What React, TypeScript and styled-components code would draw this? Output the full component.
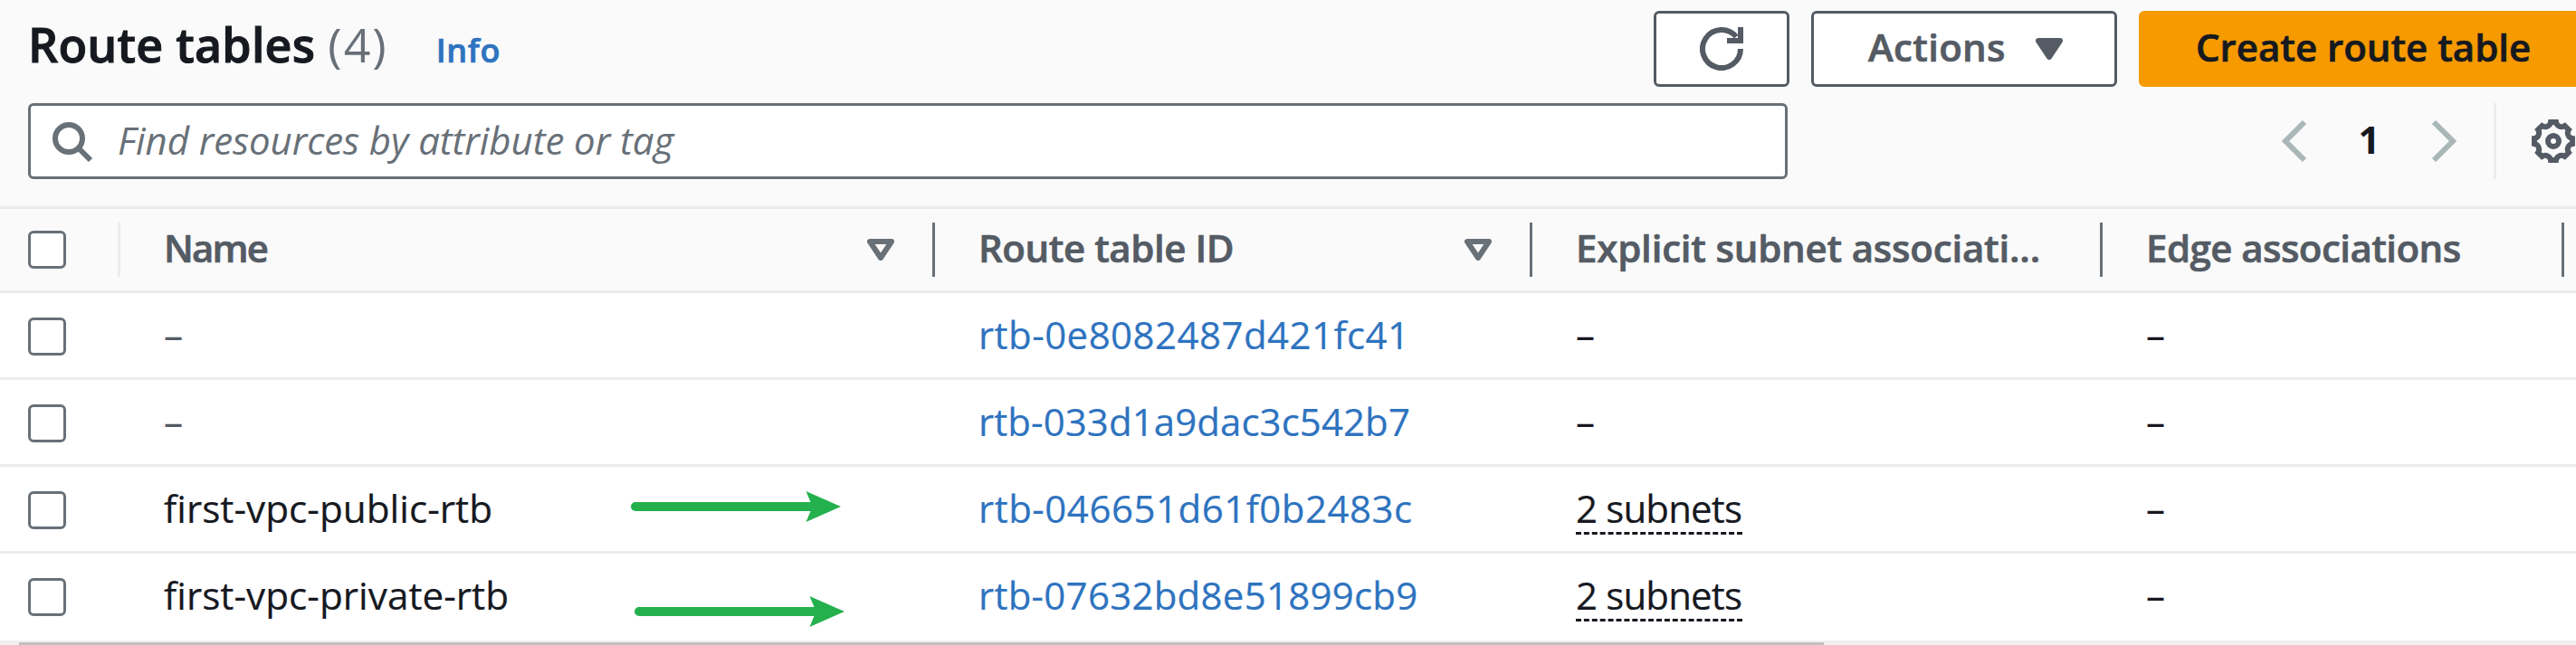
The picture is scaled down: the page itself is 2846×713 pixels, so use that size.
import React from "react";
import styled, { createGlobalStyle, css } from "styled-components";

const color = {
  text: "#16191f",
  heading: "#545b64",
  muted: "#687078",
  link: "#2e73bf",
  line: "#eaeded",
  panel: "#fafafa",
  disabled: "#aab7b8",
  primary: "#f69a00",
  marker: "#24b14d",
};

const GlobalStyle = createGlobalStyle`
  *, *::before, *::after { box-sizing: border-box; }
  body {
    margin: 0;
    overflow: hidden;
    background: #fff;
    color: ${color.text};
    font-family: "Open Sans", "Noto Sans", sans-serif;
    font-size: 42px;
    line-height: 60px;
  }
`;

const strong = css`
  font-weight: 600;
  -webkit-text-stroke: 0.7px currentColor;
`;

const Panel = styled.main`
  position: relative;
  width: 2846px;
  height: 713px;
  overflow: hidden;
  display: flex;
  flex-direction: column;
`;

const Toolbar = styled.header`
  height: 231px;
  flex: none;
  padding: 12px 0 0 31px;
  background: ${color.panel};
  border-bottom: 3px solid ${color.line};
  display: flex;
  flex-direction: column;
  gap: 18px;
`;

const ToolbarRow = styled.div`
  display: flex;
  height: 84px;
  flex: none;
`;

const TitleGroup = styled.div`
  flex: none;
  width: 1796px;
  display: flex;
  align-items: baseline;
  padding-top: 7px;
`;

const Title = styled.h1`
  ${strong}
  margin: 0;
  font-size: 52px;
  line-height: 60px;
  letter-spacing: 0.2px;
  -webkit-text-stroke-width: 1px;
`;

const Count = styled.span`
  margin-left: 14px;
  font-size: 52px;
  letter-spacing: 2px;
  color: ${color.muted};
`;

const InfoLink = styled.a`
  ${strong}
  margin-left: 53px;
  font-size: 36px;
  letter-spacing: 0.6px;
  color: ${color.link};
`;

const Button = styled.button<{ $primary?: boolean; $width: number }>`
  flex: none;
  width: ${(p) => p.$width}px;
  height: 84px;
  margin: 0 24px 0 0;
  padding: 0 0 4px 60px;
  display: flex;
  align-items: center;
  font: inherit;
  ${strong}
  letter-spacing: ${(p) => (p.$primary ? 0 : 0.3)}px;
  white-space: nowrap;
  color: ${(p) => (p.$primary ? color.text : color.heading)};
  background: ${(p) => (p.$primary ? color.primary : "#fff")};
  border: 3px solid ${(p) => (p.$primary ? color.primary : color.heading)};
  border-radius: 6px;
`;

const IconButton = styled(Button)`
  padding: 0;
  justify-content: center;
`;

const CaretIcon = styled.svg`
  width: 30px;
  height: 24px;
  margin: 4px 57px 0 auto;
`;

const SearchField = styled.label`
  flex: none;
  width: 1944px;
  height: 84px;
  padding: 0 21px;
  display: flex;
  align-items: center;
  gap: 27px;
  background: #fff;
  border: 3px solid ${color.muted};
  border-radius: 6px;
`;

const Placeholder = styled.span`
  padding-bottom: 2px;
  font-style: italic;
  letter-spacing: -0.08px;
  color: ${color.muted};
`;

const Glyph = styled.svg`
  flex: none;
  width: 48px;
  height: 48px;
  fill: none;
  stroke-width: 2;
`;

const Pagination = styled.nav`
  display: flex;
  align-items: center;
  margin-left: 535px;
`;

const PageNumber = styled.span`
  width: 119px;
  padding-bottom: 4px;
  text-align: center;
  font-weight: 700;
`;

const Settings = styled.div`
  height: 84px;
  margin-left: 30px;
  padding-left: 39px;
  display: flex;
  align-items: center;
  border-left: 3px solid ${color.line};
`;

const Grid = styled.div`
  flex: none;
  display: grid;
  grid-template-columns: 133px 900px 660px 630px 510px 13px;
`;

const HeadRow = styled(Grid)`
  height: 93px;
  background: ${color.panel};
  border-bottom: 3px solid ${color.line};
  align-items: center;
`;

const HeadCell = styled.div<{ $faint?: boolean; $tracking?: number }>`
  height: 60px;
  padding-left: ${(p) => (p.$faint ? 31 : 48)}px;
  padding-right: 42px;
  display: flex;
  align-items: center;
  justify-content: space-between;
  border-right: 3px solid ${(p) => (p.$faint ? color.line : color.muted)};
  ${strong}
  letter-spacing: ${(p) => p.$tracking ?? 0}px;
  white-space: nowrap;
  color: ${color.heading};
`;

const HeadLabel = styled.span`
  padding-bottom: 4px;
`;

const SortIcon = styled.svg`
  width: 30px;
  height: 24px;
`;

const Body = styled.section`
  flex: none;
`;

const Row = styled(Grid)`
  height: 96px;
  border-bottom: 3px solid ${color.line};

  &:last-of-type {
    border-bottom-color: transparent;
  }
`;

const SelectCell = styled.div`
  padding: 27px 0 0 31px;
`;

const Checkbox = styled.span`
  display: block;
  flex: none;
  width: 42px;
  height: 42px;
  background: #fff;
  border: 3px solid ${color.muted};
  border-radius: 6px;
`;

const Cell = styled.div<{ $tone?: string; $tracking?: number }>`
  padding: 16px 0 0 48px;
  white-space: nowrap;
  letter-spacing: ${(p) => p.$tracking ?? 0}px;
  -webkit-text-stroke: 0.2px currentColor;
  color: ${(p) => p.$tone ?? color.text};
`;

const NameCell = styled(Cell)`
  font-size: 42.3px;
`;

const Underlined = styled.span`
  display: block;
  width: 184px;
  height: 59px;
  letter-spacing: -0.85px;
  border-bottom: 3px dashed ${color.text};
`;

const ScrollTrack = styled.div`
  flex: none;
  height: 5px;
  padding: 2px 0 0 21px;
  background: #f0f0f0;
`;

const ScrollThumb = styled.div`
  width: 1994px;
  height: 3px;
  background: #c1c1c1;
`;

const MarkerArrow = styled.svg<{ $left: number; $top: number }>`
  position: absolute;
  left: ${(p) => p.$left}px;
  top: ${(p) => p.$top}px;
  width: 232px;
  height: 36px;
  fill: ${color.marker};
`;

type RouteTable = { name?: string; id: string; tracking: number; subnets?: string };

const routeTables: RouteTable[] = [
  { id: "rtb-0e8082487d421fc41", tracking: 0.45 },
  { id: "rtb-033d1a9dac3c542b7", tracking: 0.07 },
  { name: "first-vpc-public-rtb", id: "rtb-046651d61f0b2483c", tracking: 0.5, subnets: "2 subnets" },
  { name: "first-vpc-private-rtb", id: "rtb-07632bd8e51899cb9", tracking: 0.25, subnets: "2 subnets" },
];

const Sort = () => (
  <SortIcon viewBox="0 0 30 24">
    <path d="M3 3h24L15 21z" fill="none" stroke={color.muted} strokeWidth="6" strokeLinejoin="round" />
  </SortIcon>
);

const Arrow = ({ left, top }: { left: number; top: number }) => (
  <MarkerArrow viewBox="0 0 232 36" $left={left} $top={top}>
    <path d="M5 13H198.500L193.500 1L232 18L193.500 35L198.500 23H5A5 5 0 0 1 5 13Z" />
  </MarkerArrow>
);

export default function App() {
  return (
    <Panel>
      <GlobalStyle />
      <Toolbar>
        <ToolbarRow>
          <TitleGroup>
            <Title>Route tables</Title>
            <Count>(4)</Count>
            <InfoLink>Info</InfoLink>
          </TitleGroup>
          <IconButton $width={150} aria-label="Refresh">
            <Glyph viewBox="0 0 16 16" stroke={color.heading}>
              <path d="M15 8a7 7 0 1 1-1.600-4.450" />
              <path d="M10 5h5V0" />
            </Glyph>
          </IconButton>
          <Button $width={338}>
            Actions
            <CaretIcon viewBox="0 0 30 24">
              <path
                d="M3 3h24L15 21z"
                fill={color.heading}
                stroke={color.heading}
                strokeWidth="6"
                strokeLinejoin="round"
              />
            </CaretIcon>
          </Button>
          <Button $primary $width={500}>
            Create route table
          </Button>
        </ToolbarRow>
        <ToolbarRow>
          <SearchField>
            <Glyph viewBox="0 0 16 16" stroke={color.muted}>
              <circle cx="7" cy="7" r="5" />
              <path d="M15 15l-4.500-4.500" />
            </Glyph>
            <Placeholder>Find resources by attribute or tag</Placeholder>
          </SearchField>
          <Pagination>
            <Glyph viewBox="0 0 16 16" stroke={color.disabled}>
              <path d="M12 1L5 8l7 7" />
            </Glyph>
            <PageNumber>1</PageNumber>
            <Glyph viewBox="0 0 16 16" stroke={color.disabled}>
              <path d="M4 1l7 7-7 7" />
            </Glyph>
          </Pagination>
          <Settings>
            <Glyph viewBox="0 0 16 16" stroke={color.heading}>
              <circle cx="8" cy="8" r="2" />
              <path d="M7 1H9A2.050 2.050 0 0 0 12.200 2.350L13.650 3.800A2.050 2.050 0 0 0 15 7V9A2.050 2.050 0 0 0 13.650 12.200L12.200 13.650A2.050 2.050 0 0 0 9 15H7A2.050 2.050 0 0 0 3.800 13.650L2.350 12.200A2.050 2.050 0 0 0 1 9V7A2.050 2.050 0 0 0 2.350 3.800L3.800 2.350A2.050 2.050 0 0 0 7 1Z" />
            </Glyph>
          </Settings>
        </ToolbarRow>
      </Toolbar>

      <HeadRow>
        <HeadCell $faint>
          <Checkbox />
        </HeadCell>
        <HeadCell $tracking={-1.9}>
          <HeadLabel>Name</HeadLabel>
          <Sort />
        </HeadCell>
        <HeadCell $tracking={-0.45}>
          <HeadLabel>Route table ID</HeadLabel>
          <Sort />
        </HeadCell>
        <HeadCell $tracking={-0.2}>
          <HeadLabel>Explicit subnet associati...</HeadLabel>
        </HeadCell>
        <HeadCell $tracking={-0.55}>
          <HeadLabel>Edge associations</HeadLabel>
        </HeadCell>
      </HeadRow>

      <Body>
        {routeTables.map((table) => (
          <Row key={table.id}>
            <SelectCell>
              <Checkbox />
            </SelectCell>
            <NameCell $tone={table.name ? color.text : color.heading}>{table.name ?? "–"}</NameCell>
            <Cell $tone={color.link} $tracking={table.tracking}>
              {table.id}
            </Cell>
            <Cell>{table.subnets ? <Underlined>{table.subnets}</Underlined> : "–"}</Cell>
            <Cell>–</Cell>
          </Row>
        ))}
      </Body>

      <ScrollTrack>
        <ScrollThumb />
      </ScrollTrack>

      <Arrow left={697} top={542} />
      <Arrow left={701} top={658} />
    </Panel>
  );
}
